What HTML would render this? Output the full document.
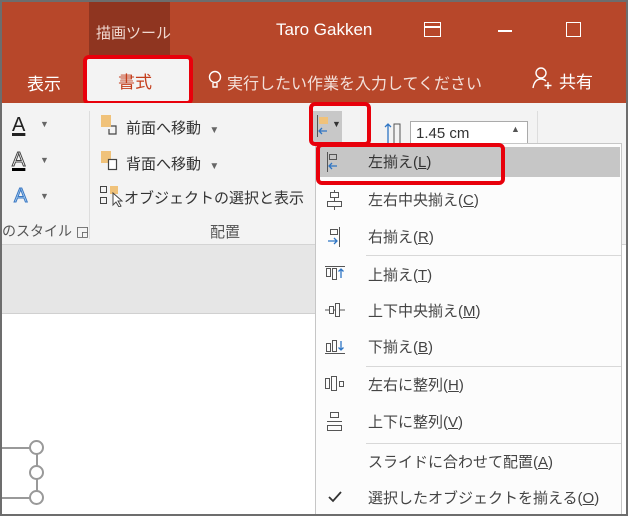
<!DOCTYPE html>
<html><head><meta charset="utf-8"><style>
*{margin:0;padding:0;box-sizing:border-box}
body{width:628px;height:516px;overflow:hidden;background:#6d6d6d;font-family:"Liberation Sans","Noto Sans CJK JP",sans-serif;position:relative}
.a{position:absolute}
.frame{left:2px;top:2px;width:624px;height:512px;background:#fff;overflow:hidden}
.title{left:0;top:0;width:624px;height:101px;background:#b7472a;color:#fff}
.t{position:absolute;white-space:nowrap}
.ribbon{left:0;top:101px;width:624px;height:142px;background:#f3f3f3;border-bottom:1px solid #d4d4d4}
.band{left:0;top:243px;width:314px;height:69px;background:#e6e6e6;border-bottom:1px solid #d0d0d0}
.menu{left:313px;top:141px;width:307px;height:372px;background:#fcfcfc;border:1px solid #c6c6c6}
.mi{position:absolute;left:52px;font-size:15px;color:#444;white-space:nowrap}
.sep{position:absolute;left:50px;right:0;height:1px;background:#d8d8d8}
.red{position:absolute;border:4px solid #e8000b;border-radius:6px}
.ic{position:absolute;left:8px}
</style></head><body>
<div class="a frame">
 <div class="a title">
  <div class="a" style="left:87px;top:0;width:81px;height:54px;background:#8f3520"></div>
  <div class="t" style="left:94px;top:20px;font-size:15px;color:#f0d8d0">描画ツール</div>
  <div class="t" style="left:274px;top:18px;font-size:17px">Taro Gakken</div>
  <div class="a" style="left:422px;top:20px;width:17px;height:15px;border:1.5px solid #fff"></div>
  <div class="a" style="left:422px;top:24px;width:17px;height:1.5px;background:#fff"></div>
  <div class="a" style="left:496px;top:28px;width:14px;height:1.5px;background:#fff"></div>
  <div class="a" style="left:564px;top:20px;width:15px;height:15px;border:1.5px solid #fff"></div>
  <div class="t" style="left:25px;top:68px;font-size:17px">表示</div>
  <div class="a" style="left:83px;top:57px;width:105px;height:45px;background:#f3f3f3"></div>
  <div class="t" style="left:116px;top:66px;font-size:17px;color:#c43e1c">書式</div>
  <svg class="a" style="left:206px;top:68px" width="14" height="20"><circle cx="7" cy="7" r="5.5" fill="none" stroke="#fff" stroke-width="1.4"/><path d="M5 13v4h4v-4" fill="none" stroke="#fff" stroke-width="1.4"/></svg>
  <div class="t" style="left:225px;top:68px;font-size:16px;color:#f3e0da">実行したい作業を入力してください</div>
  <svg class="a" style="left:530px;top:64px" width="22" height="24"><circle cx="9" cy="7" r="5" fill="none" stroke="#fff" stroke-width="1.4"/><path d="M1 22c1-6 4-9 8-9 2 0 4 1 5 2M16 16v7M12.5 19.5h7" fill="none" stroke="#fff" stroke-width="1.4"/></svg>
  <div class="t" style="left:557px;top:66px;font-size:17px">共有</div>
 </div>
 <div class="red" style="left:81px;top:53px;width:110px;height:50px"></div>
 <div class="a ribbon">
  <div class="t" style="left:10px;top:11px;font-size:20px;color:#222;text-decoration:underline;text-decoration-thickness:3px">A</div><div class="t" style="left:38px;top:16px;font-size:9px;color:#666">▼</div>
  <div class="t" style="left:10px;top:46px;font-size:20px;color:#fff;-webkit-text-stroke:1px #444;text-decoration:underline #000;text-decoration-thickness:3px">A</div><div class="t" style="left:38px;top:52px;font-size:9px;color:#666">▼</div>
  <div class="t" style="left:12px;top:82px;font-size:20px;color:#aad0f0;-webkit-text-stroke:1px #3b78c4">A</div><div class="t" style="left:38px;top:88px;font-size:9px;color:#666">▼</div>
  <div class="t" style="left:0;top:118px;font-size:14px;color:#555">のスタイル ◲</div>
  <div class="a" style="left:87px;top:8px;width:1px;height:128px;background:#ddd"></div>
  <svg class="a" style="left:98px;top:11px" width="22" height="22"><rect x="1" y="1" width="10" height="12" fill="#f0c27a"/><path d="M11 12h5v8H9v-5" fill="none" stroke="#444" stroke-width="1.2"/></svg>
  <div class="t" style="left:124px;top:14px;font-size:15px;color:#333">前面へ移動 &nbsp;<span style="font-size:10px;color:#666">▼</span></div>
  <svg class="a" style="left:98px;top:47px" width="22" height="22"><rect x="1" y="1" width="10" height="12" fill="#f0c27a"/><rect x="8.5" y="9.5" width="8" height="10" fill="#fff" stroke="#444" stroke-width="1.2"/></svg>
  <div class="t" style="left:124px;top:50px;font-size:15px;color:#333">背面へ移動 &nbsp;<span style="font-size:10px;color:#666">▼</span></div>
  <svg class="a" style="left:97px;top:82px" width="24" height="22"><rect x="1.5" y="1.5" width="6" height="6" fill="none" stroke="#444"/><rect x="1.5" y="12.5" width="6" height="6" fill="none" stroke="#444"/><rect x="11" y="1" width="8" height="8" fill="#f0c27a"/><path d="M14 8l0 12 3-3 3 5 2-1-3-5h4z" fill="#fff" stroke="#444"/></svg>
  <div class="t" style="left:122px;top:84px;font-size:15px;color:#333">オブジェクトの選択と表示</div>
  <div class="t" style="left:208px;top:118px;font-size:15px;color:#555">配置</div>
  <div class="a" style="left:310px;top:8px;width:30px;height:34px;background:#c8c8c8"></div>
  <svg class="a" style="left:313px;top:11px" width="16" height="26"><path d="M2.5 1v22" stroke="#555"/><rect x="4" y="3" width="9" height="7" fill="#f0c27a"/><path d="M12 17H4M7 14l-3 3 3 3" fill="none" stroke="#2e75c4" stroke-width="1.3"/></svg>
  <div class="t" style="left:330px;top:16px;font-size:9px;color:#333">▼</div>
  <svg class="a" style="left:380px;top:19px" width="22" height="24"><path d="M6 2v20M3 5l3-3 3 3" fill="none" stroke="#2e75c4" stroke-width="1.3"/><rect x="12" y="2" width="6" height="20" fill="none" stroke="#555"/></svg>
  <div class="a" style="left:408px;top:18px;width:118px;height:24px;background:#fff;border:1px solid #aaa"></div>
  <div class="t" style="left:414px;top:22px;font-size:15px;color:#333">1.45 cm</div>
  <div class="t" style="left:509px;top:21px;font-size:9px;color:#555">▲</div>
  <div class="a" style="left:535px;top:8px;width:1px;height:128px;background:#ddd"></div>
 </div>
 <div class="a band"></div>
 <div class="a" style="left:0;top:445px;width:28px;height:1.5px;background:#999"></div>
 <div class="a" style="left:0;top:495px;width:28px;height:1.5px;background:#999"></div>
 <div class="a" style="left:34px;top:445px;width:1.5px;height:50px;background:#999"></div>
 <div class="a" style="left:27px;top:438px;width:15px;height:15px;border:2px solid #999;border-radius:50%;background:#fff"></div>
 <div class="a" style="left:27px;top:463px;width:15px;height:15px;border:2px solid #999;border-radius:50%;background:#fff"></div>
 <div class="a" style="left:27px;top:488px;width:15px;height:15px;border:2px solid #999;border-radius:50%;background:#fff"></div>
 <div class="a menu">
  <div class="a" style="left:2px;top:3px;width:302px;height:30px;background:#c6c6c6"></div>
  <svg class="ic" style="top:7px" width="20" height="22"><path d="M3.5 1v20" stroke="#555"/><rect x="5.5" y="3.5" width="7" height="5" fill="none" stroke="#555"/><path d="M13 15H5M8 12l-3 3 3 3" fill="none" stroke="#2e75c4" stroke-width="1.3"/></svg>
  <div class="mi" style="top:7px;color:#333">左揃え(<u>L</u>)</div>
  <svg class="ic" style="top:45px" width="20" height="22"><path d="M10.5 1v20" stroke="#555"/><rect x="6.5" y="3.5" width="8" height="5" fill="#fcfcfc" stroke="#555"/><rect x="3.5" y="12.5" width="14" height="5" fill="#fcfcfc" stroke="#555"/></svg>
  <div class="mi" style="top:45px">左右中央揃え(<u>C</u>)</div>
  <svg class="ic" style="top:82px" width="20" height="22"><path d="M15.5 1v20" stroke="#555"/><rect x="6.5" y="3.5" width="7" height="5" fill="none" stroke="#555"/><path d="M4 15h9M10 12l3 3-3 3" fill="none" stroke="#2e75c4" stroke-width="1.3"/></svg>
  <div class="mi" style="top:82px">右揃え(<u>R</u>)</div>
  <div class="sep" style="top:111px"></div>
  <svg class="ic" style="top:120px" width="22" height="20"><path d="M1 2.5h20" stroke="#555"/><rect x="2.5" y="4.5" width="4" height="8" fill="none" stroke="#555"/><rect x="8.5" y="4.5" width="4" height="11" fill="none" stroke="#555"/><path d="M17 14V5M14.5 7.5L17 5l2.5 2.5" fill="none" stroke="#2e75c4" stroke-width="1.3"/></svg>
  <div class="mi" style="top:120px">上揃え(<u>T</u>)</div>
  <svg class="ic" style="top:156px" width="22" height="20"><path d="M1 10h20" stroke="#555"/><rect x="5.5" y="6.5" width="4" height="7" fill="#fcfcfc" stroke="#555"/><rect x="11.5" y="3.5" width="4" height="13" fill="#fcfcfc" stroke="#555"/></svg>
  <div class="mi" style="top:156px">上下中央揃え(<u>M</u>)</div>
  <svg class="ic" style="top:192px" width="22" height="20"><path d="M1 17.5h20" stroke="#555"/><rect x="2.5" y="7.5" width="4" height="8" fill="none" stroke="#555"/><rect x="8.5" y="4.5" width="4" height="11" fill="none" stroke="#555"/><path d="M17 5v9M14.5 11.5L17 14l2.5-2.5" fill="none" stroke="#2e75c4" stroke-width="1.3"/></svg>
  <div class="mi" style="top:192px">下揃え(<u>B</u>)</div>
  <div class="sep" style="top:222px"></div>
  <svg class="ic" style="top:230px" width="22" height="20"><rect x="1.5" y="4.5" width="4" height="10" fill="none" stroke="#555"/><rect x="7.5" y="2.5" width="5" height="14" fill="none" stroke="#555"/><rect x="15.5" y="7.5" width="4" height="5" fill="none" stroke="#555"/></svg>
  <div class="mi" style="top:230px">左右に整列(<u>H</u>)</div>
  <svg class="ic" style="top:267px" width="22" height="22"><rect x="6.5" y="1.5" width="8" height="5" fill="none" stroke="#555"/><path d="M3 10.5h15" stroke="#555"/><rect x="3.5" y="14.5" width="14" height="5" fill="none" stroke="#555"/></svg>
  <div class="mi" style="top:267px">上下に整列(<u>V</u>)</div>
  <div class="sep" style="top:299px"></div>
  <div class="mi" style="top:307px">スライドに合わせて配置(<u>A</u>)</div>
  <svg class="ic" style="top:347px;left:12px" width="14" height="12"><path d="M1 6l4 4 8-9" fill="none" stroke="#333" stroke-width="1.8"/></svg>
  <div class="mi" style="top:343px">選択したオブジェクトを揃える(<u>O</u>)</div>
 </div>
 <div class="red" style="left:307px;top:100px;width:62px;height:44px"></div>
 <div class="red" style="left:314px;top:141px;width:189px;height:42px"></div>
</div>
</body></html>
